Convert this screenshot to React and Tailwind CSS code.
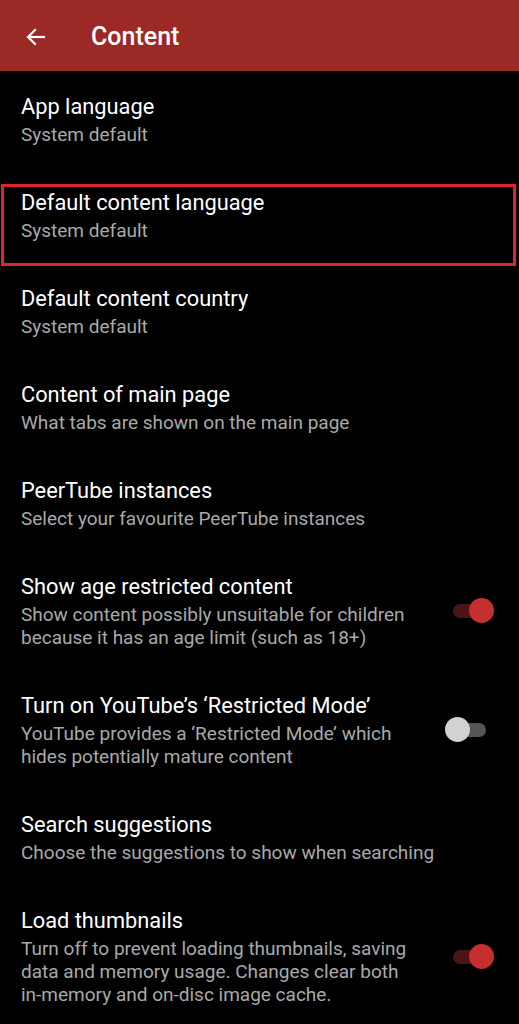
import React from 'react';

const items = [
  { title: 'App language', summary: ['System default'] },
  { title: 'Default content language', summary: ['System default'], marked: true },
  { title: 'Default content country', summary: ['System default'] },
  { title: 'Content of main page', summary: ['What tabs are shown on the main page'] },
  { title: 'PeerTube instances', summary: ['Select your favourite PeerTube instances'] },
  {
    title: 'Show age restricted content',
    summary: ['Show content possibly unsuitable for children', 'because it has an age limit (such as 18+)'],
    toggle: true,
  },
  {
    title: 'Turn on YouTube\u2019s \u2018Restricted Mode\u2019',
    summary: ['YouTube provides a \u2018Restricted Mode\u2019 which', 'hides potentially mature content'],
    toggle: false,
  },
  { title: 'Search suggestions', summary: ['Choose the suggestions to show when searching'] },
  {
    title: 'Load thumbnails',
    summary: [
      'Turn off to prevent loading thumbnails, saving',
      'data and memory usage. Changes clear both',
      'in-memory and on-disc image cache.',
    ],
    toggle: true,
  },
];

function Toggle({ on }) {
  return (
    <div className="relative w-[42px] h-[26px] shrink-0">
      <div
        className={`absolute top-[6px] left-[2px] w-[33px] h-[14px] rounded-full ${
          on ? 'bg-[#4a1515]' : 'bg-[#555555]'
        }`}
      />
      <div
        className={`absolute top-[0px] w-[25px] h-[25px] rounded-full ${
          on ? 'left-[18px] bg-[#c62f2f]' : 'left-[-6px] bg-[#d2d2d2]'
        }`}
      />
    </div>
  );
}

function PrefRow({ item }) {
  return (
    <div className="relative flex items-center pl-[21px] pr-[26px] pt-[22px] pb-[21px]">
      <div className="flex-1 min-w-0">
        <div className="text-[21.8px] leading-[28px] text-white">{item.title}</div>
        <div className="mt-[2px]">
          {item.summary.map((line, i) => (
            <div key={i} className="text-[19px] leading-[23px] text-[#a9a9a9] whitespace-nowrap">
              {line}
            </div>
          ))}
        </div>
      </div>
      {item.toggle !== undefined && <Toggle on={item.toggle} />}
      {/* highlight frame drawn over the row */}
      {item.marked && (
        <div className="absolute left-[1px] right-[3px] top-[17px] bottom-[-3px] border-[3px] border-[#e0252a] pointer-events-none" />
      )}
    </div>
  );
}

export default function App() {
  return (
    <div className="w-[519px] h-[1024px] overflow-hidden bg-black" style={{ fontFamily: 'Roboto, "Noto Sans", sans-serif' }}>
      <div className="h-[71px] bg-[#9b2926] flex items-center pt-[3px]">
        <div className="w-[91px] pl-[24px]">
          <svg width="24" height="24" viewBox="0 0 24 24" fill="none" stroke="white" strokeWidth="2.2" strokeLinecap="square">
            <path d="M20 12H5" />
            <path d="M11 5l-7 7 7 7" />
          </svg>
        </div>
        <div className="text-[25px] font-medium text-white">Content</div>
      </div>
      <div>
        {items.map((item) => (
          <PrefRow key={item.title} item={item} />
        ))}
      </div>
    </div>
  );
}
